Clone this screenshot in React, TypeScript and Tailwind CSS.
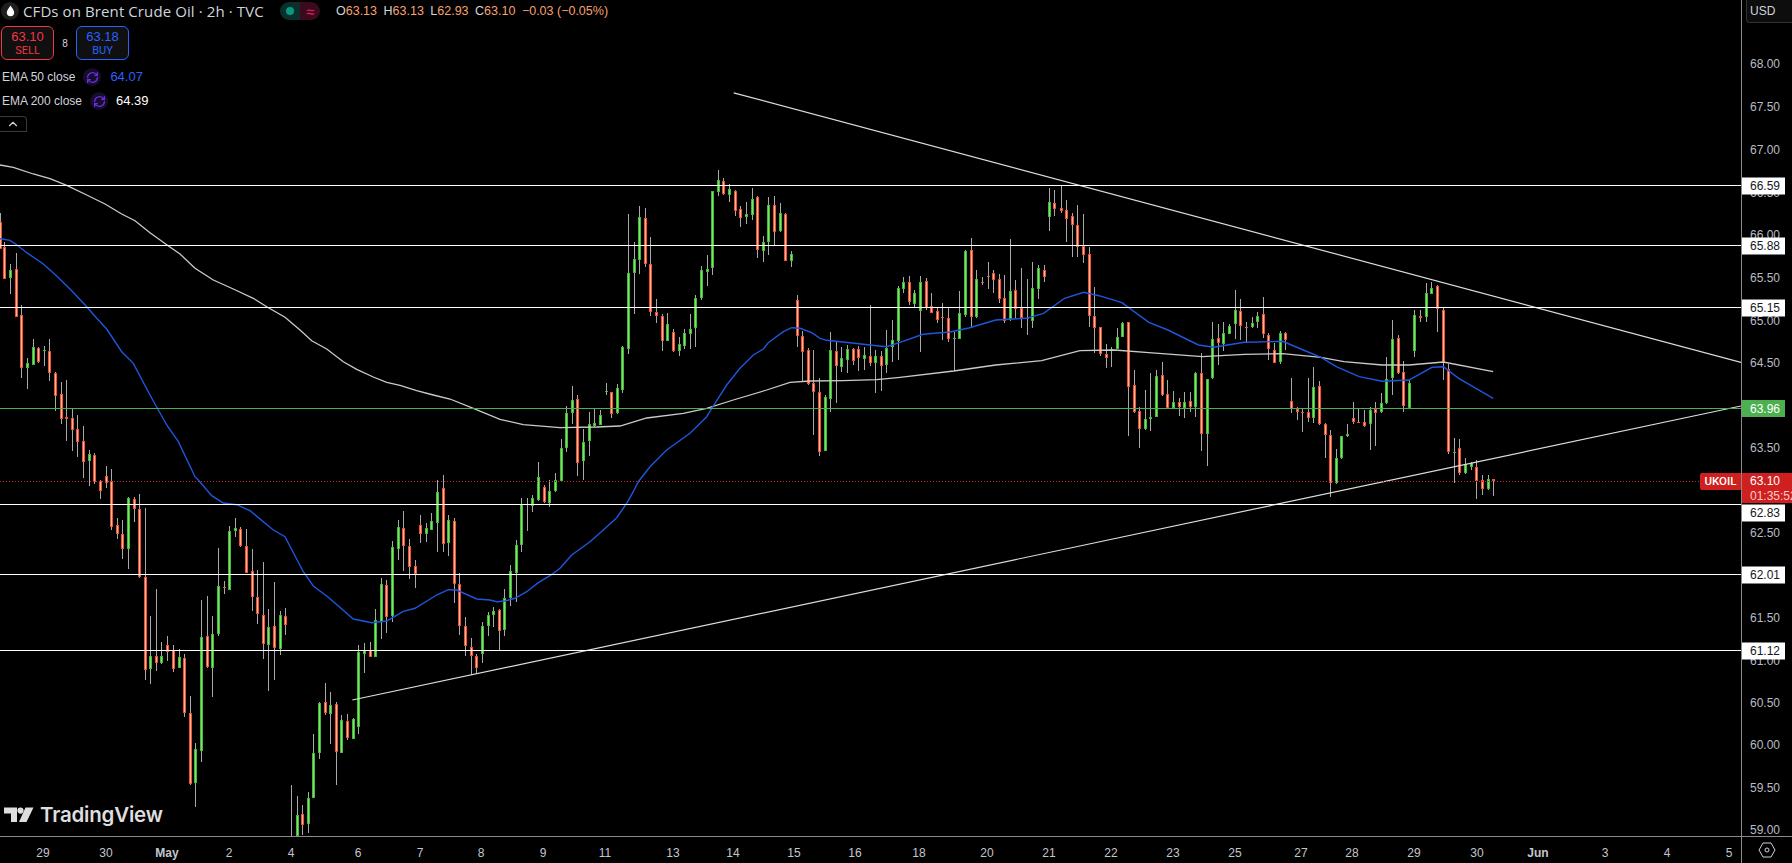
import { RefreshCw, ChevronUp } from "lucide-react";

type C = number[];
const FONT = "font-['Liberation_Sans',Arial,sans-serif]";

// [x, wickTop, wickBottom, bodyTop, bodyBottom, up]
const A: C[] = [
  [0, 190, 296, 216, 296, 0], [13, 275, 386, 292, 386, 0], [31, 342, 432, 360, 384, 1], [49, 310, 500, 358, 500, 0],
  [64, 465, 684, 496, 654, 0], [82, 625, 717, 640, 654, 1], [100, 567, 645, 592, 644, 1], [115, 592, 638, 595, 636, 0],
  [133, 588, 648, 600, 602, 1], [148, 567, 693, 604, 670, 0], [166, 665, 783, 670, 738, 0], [184, 696, 822, 733, 806, 0],
  [199, 690, 873, 802, 808, 0], [217, 777, 903, 805, 839, 0], [232, 795, 921, 838, 876, 0], [250, 828, 984, 874, 935, 0],
  [268, 900, 1008, 912, 933, 1], [283, 909, 1002, 915, 996, 0], [301, 990, 1047, 992, 1022, 0], [319, 948, 1014, 979, 999, 0],
];
const B: C[] = [
  [334, -33, 150, 4, 140, 0], [352, 114, 177, 136, 161, 0], [367, 120, 237, 163, 206, 0], [385, 52, 267, 55, 207, 1],
  [403, 50, 126, 58, 86, 0], [418, 42, 293, 88, 292, 0], [436, 84, 600, 292, 569, 0], [451, 408, 612, 529, 566, 1],
  [469, 327, 573, 529, 548, 0], [484, 486, 552, 529, 548, 1], [502, 468, 543, 496, 515, 0], [520, 495, 576, 511, 566, 0],
  [538, 507, 564, 532, 563, 1], [553, 522, 711, 535, 698, 0], [571, 648, 915, 700, 912, 0], [586, 790, 981, 808, 908, 1],
  [604, 360, 846, 472, 812, 1], [622, 348, 564, 469, 561, 0], [637, 408, 651, 463, 563, 1], [655, 204, 468, 319, 462, 1],
  [673, 303, 342, 322, 324, 0], [688, 138, 330, 154, 329, 1], [706, 114, 171, 145, 153, 1], [721, 141, 201, 148, 198, 0],
  [739, 147, 279, 199, 278, 0], [757, 207, 393, 274, 350, 0], [772, 270, 432, 352, 403, 0], [790, 246, 537, 406, 492, 0],
  [805, 387, 633, 441, 495, 1], [823, 306, 600, 439, 503, 0], [841, 393, 525, 406, 507, 1], [856, 384, 465, 409, 435, 0],
  [874, 915, 1068, 1068, 1068, 1], [892, 948, 1068, 1005, 1068, 1], [907, 975, 1065, 1003, 1034, 0], [925, 936, 1059, 955, 1031, 1],
  [940, 762, 954, 820, 953, 1], [958, 667, 837, 670, 819, 1], [976, 609, 704, 667, 698, 0], [991, 636, 792, 676, 701, 1],
  [1009, 666, 915, 673, 815, 0], [1024, 705, 819, 721, 818, 1], [1042, 702, 780, 724, 775, 0], [1060, 714, 778, 717, 776, 1],
  [1075, 495, 762, 517, 740, 1], [1093, 489, 579, 511, 521, 1], [1111, 486, 531, 509, 530, 0], [1126, 387, 531, 421, 530, 1],
  [1144, 294, 477, 313, 425, 1], [1159, 300, 459, 316, 410, 0], [1177, 183, 426, 202, 408, 1], [1195, 121, 240, 142, 207, 1],
  [1210, 93, 273, 145, 197, 0], [1228, 177, 297, 199, 262, 0], [1246, 240, 324, 259, 283, 0], [1261, 105, 189, 136, 161, 0],
  [1279, 129, 186, 145, 163, 1], [1294, 99, 150, 124, 149, 1], [1312, 0, 216, 37, 129, 1], [1330, -15, 216, 25, 191, 0],
  [1345, 105, 228, 121, 188, 1], [1363, 115, 370, 124, 311, 0], [1378, 280, 465, 313, 437, 0], [1396, 411, 528, 439, 497, 0],
  [1414, 474, 585, 502, 527, 0], [1429, 522, 582, 529, 563, 0], [1447, 426, 549, 439, 521, 1], [1465, 396, 468, 406, 438, 1],
  [1480, 381, 441, 394, 404, 1], [1498, 387, 510, 390, 452, 0],
];
const D: C[] = [
  [43, 327, 468, 354, 450, 1], [61, 255, 378, 273, 354, 1], [79, 180, 366, 195, 279, 1], [94, 54, 216, 73, 195, 1],
  [112, 54, 153, 71, 75, 1], [127, 45, 96, 54, 78, 1], [145, -54, 62, -10, 60, 1], [163, 15, 69, 21, 66, 0], [178, 0, 81, 33, 69, 1],
];
const E: C[] = [
  [316, 968, 1025, 990, 1023, 1], [334, 867, 990, 895, 992, 1], [349, 768, 905, 789, 893, 1], [367, 708, 822, 751, 788, 1],
  [382, 735, 978, 748, 938, 0], [400, 837, 990, 875, 932, 1], [418, 786, 918, 823, 872, 1], [433, 775, 830, 820, 827, 1],
  [451, 781, 825, 796, 824, 1], [469, 700, 735, 723, 725, 1], [484, 727, 804, 727, 792, 0], [502, 702, 792, 715, 788, 1],
  [517, 588, 730, 591, 719, 1], [535, 192, 612, 370, 596, 1], [553, 276, 492, 328, 368, 1], [568, 168, 372, 202, 329, 1],
  [586, 174, 350, 205, 341, 0], [601, 261, 498, 343, 485, 0], [619, 447, 519, 487, 497, 0], [637, 492, 603, 499, 574, 0],
  [652, 489, 573, 523, 572, 1], [670, 537, 606, 547, 603, 0], [688, 561, 618, 583, 603, 1], [703, 537, 597, 549, 588, 1],
  [721, 492, 597, 538, 551, 1], [736, 435, 591, 445, 533, 1], [754, 348, 450, 361, 444, 1], [772, 315, 408, 358, 365, 1],
  [787, 124, 375, 124, 353, 1], [805, 60, 138, 91, 125, 1], [820, 84, 135, 94, 131, 0], [838, 102, 156, 118, 134, 1],
  [856, 120, 198, 124, 182, 0], [871, 168, 231, 178, 203, 0], [889, 156, 222, 193, 200, 1], [907, 114, 210, 148, 194, 1],
  [922, 138, 324, 142, 299, 0], [940, 258, 336, 277, 302, 1], [955, 141, 315, 166, 275, 1], [973, 138, 288, 166, 245, 0],
  [991, 159, 246, 190, 242, 1], [1006, 190, 333, 193, 332, 0], [1024, 303, 351, 313, 332, 1], [1042, 435, 591, 451, 559, 0],
  [1057, 543, 693, 559, 605, 0], [1075, 594, 705, 601, 703, 0], [1090, 600, 855, 700, 727, 0], [1108, 684, 918, 727, 905, 0],
  [1126, 735, 903, 742, 902, 1], [1141, 546, 786, 601, 746, 1], [1159, 573, 759, 604, 647, 0], [1174, 591, 666, 625, 650, 1],
  [1192, 585, 669, 598, 629, 1], [1210, 594, 645, 598, 632, 0], [1225, 588, 663, 598, 623, 0], [1243, 591, 660, 616, 626, 1],
  [1261, 465, 648, 619, 638, 0], [1276, 600, 729, 619, 638, 1], [1294, 603, 723, 619, 647, 0], [1309, 540, 669, 595, 644, 1],
  [1327, 510, 636, 571, 592, 1], [1345, 408, 630, 415, 574, 1],
];
const F: C[] = [
  [9, 380, 430, 397, 416, 1], [24, 378, 465, 397, 455, 0], [39, 420, 470, 430, 462, 1], [54, 378, 605, 397, 482, 1],
  [69, 385, 480, 394, 473, 0], [82, 430, 490, 469, 488, 0], [97, 470, 520, 484, 510, 0], [112, 458, 570, 501, 503, 0],
  [127, 470, 575, 505, 566, 0], [142, 545, 663, 565, 567, 1], [156, 423, 565, 490, 566, 1], [171, 300, 500, 304, 494, 1],
  [186, 265, 533, 301, 500, 0], [200, 360, 505, 388, 500, 1], [215, 380, 405, 396, 399, 0], [230, 337, 418, 379, 381, 0],
  [244, 360, 430, 369, 389, 0], [259, 372, 460, 388, 446, 0], [273, 375, 520, 445, 514, 0], [288, 267, 512, 423, 508, 1],
  [303, 390, 505, 421, 476, 0], [318, 355, 535, 473, 503, 0], [333, 387, 555, 503, 508, 0], [346, 335, 535, 415, 512, 1],
  [362, 345, 447, 355, 416, 1], [378, 345, 395, 361, 380, 0],
  [390, 113, 242, 156, 200, 1], [405, 120, 197, 159, 176, 0], [421, 105, 190, 175, 182, 0], [435, 150, 275, 181, 208, 0],
  [450, 190, 322, 199, 226, 0], [464, 165, 322, 226, 292, 0], [479, 192, 340, 289, 316, 0], [494, 292, 530, 313, 499, 0],
  [508, 410, 610, 499, 533, 0], [523, 530, 617, 531, 613, 0], [539, 583, 654, 613, 623, 0], [553, 590, 650, 597, 601, 1],
  [568, 533, 597, 562, 596, 1], [582, 516, 560, 518, 561, 1], [597, 515, 857, 517, 710, 0], [612, 660, 790, 706, 785, 0],
  [626, 770, 893, 784, 838, 0], [641, 720, 840, 807, 838, 1], [655, 670, 842, 801, 806, 1], [670, 660, 802, 679, 800, 1],
  [685, 636, 737, 676, 736, 0], [699, 690, 775, 733, 773, 0], [714, 722, 775, 757, 773, 1], [730, 743, 797, 757, 770, 0],
  [743, 725, 803, 755, 773, 1], [759, 725, 785, 754, 770, 0], [773, 667, 800, 670, 770, 1], [788, 610, 902, 670, 851, 0],
  [803, 690, 947, 688, 851, 1], [817, 515, 686, 568, 685, 1], [832, 522, 644, 565, 578, 0], [845, 517, 603, 550, 582, 1],
  [860, 523, 553, 529, 551, 1], [877, 420, 566, 481, 521, 1], [889, 447, 569, 484, 529, 0], [905, 517, 578, 532, 534, 0],
  [920, 500, 534, 518, 532, 1], [934, 487, 533, 499, 517, 1], [949, 442, 565, 493, 553, 0], [963, 548, 630, 556, 596, 0],
  [978, 580, 637, 599, 638, 0], [993, 544, 642, 548, 635, 1], [1007, 546, 600, 550, 570, 0],
  [1022, 684, 790, 752, 777, 0], [1038, 770, 810, 778, 785, 0], [1052, 775, 845, 786, 788, 0], [1067, 685, 817, 787, 805, 0],
  [1081, 650, 820, 712, 803, 1], [1096, 693, 825, 709, 821, 0], [1111, 820, 925, 822, 856, 0], [1125, 840, 1040, 856, 1000, 0],
  [1140, 897, 1002, 925, 1000, 1], [1154, 857, 927, 859, 925, 1], [1169, 822, 862, 852, 858, 1], [1185, 756, 822, 805, 815, 0],
  [1198, 775, 820, 816, 819, 0], [1214, 780, 830, 817, 827, 0], [1229, 772, 900, 780, 823, 1], [1243, 757, 887, 778, 788, 0],
  [1258, 730, 790, 760, 785, 1], [1271, 620, 763, 686, 759, 1], [1287, 510, 735, 568, 685, 1], [1302, 555, 672, 565, 670, 0],
  [1316, 632, 785, 666, 767, 0], [1331, 690, 775, 700, 775, 1], [1344, 480, 620, 495, 602, 1], [1360, 480, 515, 499, 503, 0],
  [1375, 398, 515, 430, 500, 1], [1389, 395, 430, 415, 431, 1], [1405, 405, 545, 408, 478, 0], [1420, 475, 690, 481, 635, 0],
  [1434, 642, 912, 658, 907, 0], [1449, 865, 1000, 906, 908, 1], [1463, 868, 975, 895, 970, 0], [1478, 923, 972, 942, 970, 1],
  [1493, 935, 960, 940, 950, 1], [1507, 930, 1047, 952, 993, 0], [1522, 976, 1035, 990, 1016, 0], [1538, 976, 1020, 988, 1018, 1],
  [1552, 987, 1037, 988, 994, 0],
];

const conv = (list: C[], ox: number, oy: number, sx = 3): C[] =>
  list.map(([x, a, b, c, d, u]) => [ox + x / sx, oy + a / 3, oy + b / 3, oy + c / 3, oy + d / 3, u]);

const candles: C[] = [
  ...conv(A, 0, 150),
  ...conv(B, 0, 480),
  [499.7, 609, 650, 610, 631, 0],
  ...conv(D, 490, 480),
  ...conv(E, 450, 150),
  ...conv(F, 900, 150, 2.613),
];

const path = (list: number[][], ox: number, oy: number, sx = 3) =>
  list.map(([x, y]) => `${(ox + x / sx).toFixed(1)},${(oy + y / 3).toFixed(1)}`).join(" ");

const ema200 = [
  path([[0,45],[40,52],[100,72],[150,86],[200,106],[260,135],[315,162],[365,192],[405,212],[450,248],[500,284],[540,312],[585,355],[640,390],[700,417],[760,445],[800,470],[855,502],[900,540],[935,572],[980,597],[1030,635],[1070,658],[1120,681],[1160,697],[1200,706],[1250,722],[1300,735]], 0, 150),
  path([[0,747],[70,775],[150,808],[220,824],[330,833],[440,831],[510,828],[590,804],[700,790],[770,775],[850,750],[950,720],[1020,697],[1080,693],[1180,692],[1280,689]], 450, 150),
  path([[0,682],[140,663],[250,645],[370,632],[470,602],[560,600],[650,608],[790,620],[900,613],[1000,611],[1100,622],[1160,635],[1260,645],[1330,645],[1420,636],[1550,665]], 900, 150, 2.613),
].join(" ");

const ema50 = [
  path([[0,266],[30,271],[50,284],[80,308],[130,342],[170,378],[215,422],[260,470],[290,505],[320,537],[365,605],[400,640],[450,735],[500,825],[535,875],[585,980]], 0, 150),
  path([[595,0],[635,47],[670,69],[710,74],[750,92],[820,150],[855,170],[910,275],[940,318],[985,352],[1060,417],[1115,428],[1160,423],[1210,394],[1245,385],[1310,345],[1345,329],[1370,330],[1430,357]], 0, 480),
  path([[0,360],[20,365],[45,363],[75,355],[110,335],[145,308],[180,287],[210,265],[245,225],[300,185],[340,150],[380,113],[410,70],[430,35]], 490, 480),
  path([[565,995],[600,950],[650,900],[720,850],[770,800],[790,768],[830,705],[870,655],[910,615],[940,597],[955,578],[1000,545],[1025,533],[1050,535],[1085,548],[1110,565],[1130,571],[1200,578],[1280,587],[1310,590]], 450, 150),
  path([[0,577],[60,553],[130,546],[180,534],[250,510],[330,505],[375,490],[430,445],[480,427],[520,437],[580,458],[650,517],[700,540],[780,585],[820,592],[900,577],[1000,574],[1060,603],[1100,622],[1140,650],[1200,680],[1260,694],[1330,690],[1390,652],[1420,650],[1460,685],[1550,745]], 900, 150, 2.613),
].join(" ");

const hLines = [185, 245, 307, 504, 574, 650];

const priceTicks: [string, number][] = [
  ["68.00", 64], ["67.50", 107], ["67.00", 150], ["66.50", 193], ["66.00", 235], ["65.50", 278], ["65.00", 321],
  ["64.50", 363], ["63.50", 448], ["62.50", 533], ["61.50", 618], ["61.00", 661], ["60.50", 703], ["60.00", 745],
  ["59.50", 788], ["59.00", 830],
];
const levelTags: [string, number][] = [["66.59", 185], ["65.88", 245], ["65.15", 307], ["62.83", 512], ["62.01", 574], ["61.12", 650]];

const dates: [string, number][] = [
  ["29", 43], ["30", 106], ["May", 167], ["2", 229], ["4", 291], ["6", 358], ["7", 420], ["8", 481], ["9", 543], ["11", 605],
  ["13", 673], ["14", 733], ["15", 794], ["16", 855], ["18", 919], ["20", 987], ["21", 1049], ["22", 1111], ["23", 1173],
  ["25", 1235], ["27", 1301], ["28", 1352], ["29", 1414], ["30", 1477], ["Jun", 1538], ["3", 1605], ["4", 1667], ["5", 1729],
];

function Chart() {
  return (
    <svg width={1741} height={836} className="block">
      <g shapeRendering="crispEdges">
        {candles.map((c, i) => {
          const col = Math.floor(c[0]);
          const up = c[5] === 1;
          const t = Math.round(c[3]);
          const h = Math.max(1, Math.round(c[4]) - t);
          return (
            <g key={i}>
              <rect x={col} y={Math.round(c[1])} width={1} height={Math.max(1, Math.round(c[2]) - Math.round(c[1]))} fill="#a9a9a9" />
              {c[3] !== c[4] && <rect x={col - 1} y={t} width={3} height={h} fill={up ? "#45b83f" : "#f0503a"} />}
              {c[3] !== c[4] && h > 2 && <rect x={col} y={t + 1} width={1} height={h - 2} fill={up ? "#7be65e" : "#ffb88f"} />}
            </g>
          );
        })}
      </g>
      <polyline points={ema200} fill="none" stroke="#cacaca" strokeWidth={1.3} />
      <polyline points={ema50} fill="none" stroke="#1f56de" strokeWidth={1.4} />
      <line x1={733.7} y1={92.8} x2={1741} y2={362.4} stroke="#dcdcdc" strokeWidth={1.2} />
      <line x1={352.3} y1={700} x2={1741} y2={406} stroke="#dcdcdc" strokeWidth={1.2} />
      <g shapeRendering="crispEdges">
        {hLines.map((y) => (
          <rect key={y} x={0} y={y} width={1741} height={1} fill="#ffffff" />
        ))}
        <rect x={0} y={408} width={1741} height={1} fill="#4caf50" />
        <line x1={0} y1={481.5} x2={1700} y2={481.5} stroke="#c2262e" strokeWidth={1} strokeDasharray="1 2" />
      </g>
    </svg>
  );
}

function Legend() {
  return (
    <div className={`absolute left-0 top-0 flex flex-col items-start text-[#d1d4dc] ${FONT}`}>
      <div className="flex h-[22px] items-center">
        <span className="ml-px flex h-[18px] w-[18px] items-center justify-center rounded-full bg-[#1f1f1f]">
          <svg width="9" height="12" viewBox="0 0 9 12">
            <path d="M4.5 0.5C5.8 2.8 8.2 5 8.2 7.6A3.7 3.7 0 0 1 0.8 7.6C0.8 5 3.2 2.8 4.5 0.5Z" fill="#ffffff" />
          </svg>
        </span>
        <span className="ml-[4px] w-[257px] whitespace-nowrap font-['Open_Sans',sans-serif] text-[15px] tracking-[0.1px] text-[#d1d4dc]">CFDs on Brent Crude Oil · 2h · TVC</span>
        <span className="flex h-[18px] w-[40px] overflow-hidden rounded-full">
          <span className="flex w-[20px] items-center justify-center bg-[#0b2f2a]">
            <span className="h-[8px] w-[8px] rounded-full bg-[#089981]" />
          </span>
          <span className="flex w-[20px] items-center justify-center bg-[#3b0a1e] text-[15px] leading-none text-[#e91e63]">≈</span>
        </span>
        <div className="ml-[16px] flex gap-[6.5px] whitespace-nowrap text-[12.5px] text-[#d1d4dc]">
          <span>O<span className="text-[#f7a072]">63.13</span></span>
          <span>H<span className="text-[#f7a072]">63.13</span></span>
          <span>L<span className="text-[#f7a072]">62.93</span></span>
          <span>C<span className="text-[#f7a072]">63.10</span></span>
          <span className="text-[#f7a072]">−0.03 (−0.05%)</span>
        </div>
      </div>
      <div className="mt-[4px] ml-px flex items-center">
        <div className="flex h-[34px] w-[53px] flex-col items-center justify-center rounded-[6px] border border-[#f23645] bg-[#101010] text-[#f23645]">
          <span className="text-[13px] leading-[15px]">63.10</span>
          <span className="font-['Roboto',sans-serif] text-[11px] leading-[14px]">SELL</span>
        </div>
        <span className="w-[22px] text-center text-[10px] text-[#d1d4dc]">8</span>
        <div className="flex h-[34px] w-[53px] flex-col items-center justify-center rounded-[6px] border border-[#2962ff] bg-[#101010] text-[#2962ff]">
          <span className="text-[13px] leading-[15px]">63.18</span>
          <span className="font-['Roboto',sans-serif] text-[11px] leading-[14px]">BUY</span>
        </div>
      </div>
      <div className="mt-[5px] ml-[2px] flex h-[24px] items-center text-[12px]">
        <span>EMA 50 close</span>
        <span className="ml-[8px] flex h-[18px] w-[18px] items-center justify-center rounded-full bg-[#160d2b]">
          <RefreshCw size={13} strokeWidth={2.4} color="#6d2ee8" />
        </span>
        <span className="ml-[9px] text-[13px] text-[#2962ff]">64.07</span>
      </div>
      <div className="ml-[2px] flex h-[24px] items-center text-[12px]">
        <span>EMA 200 close</span>
        <span className="ml-[8px] flex h-[18px] w-[18px] items-center justify-center rounded-full bg-[#160d2b]">
          <RefreshCw size={13} strokeWidth={2.4} color="#6d2ee8" />
        </span>
        <span className="ml-[8px] text-[13px] text-white">64.39</span>
      </div>
      <button className="mt-[3px] flex h-[16px] w-[27px] items-center justify-center rounded-tr-[4px] border border-l-0 border-[#3a3a3a] text-[#d1d4dc]">
        <ChevronUp size={14} strokeWidth={2} />
      </button>
    </div>
  );
}

function Watermark() {
  return (
    <div className="absolute left-[3px] top-[803px] flex h-[24px] items-center text-[#dedede]">
      <svg width="32" height="16" viewBox="0 0 32 16" fill="currentColor">
        <path d="M1 0.5H14V15H8V6.5H1Z" />
        <circle cx="17.5" cy="3.6" r="3.1" />
        <path d="M22.5 0.5H30.5L23.5 15H16Z" />
      </svg>
      <span className="ml-[5px] font-['Inter',sans-serif] text-[20.5px] font-semibold leading-none tracking-[-0.2px]">TradingView</span>
    </div>
  );
}

function PriceAxis() {
  return (
    <div className={`relative h-full w-[51px] overflow-hidden border-l border-[#8a8a8a] text-[12px] ${FONT}`}>
      <div className="absolute left-[4px] top-0 flex h-[23px] w-[60px] items-center rounded-bl-[4px] border-b border-l border-[#333333] bg-[#0d0d0d] pl-[3px] text-[#d1d4dc]">
        USD
      </div>
      {priceTicks.map(([t, y]) => (
        <span key={t} className="absolute left-[8px] -translate-y-1/2 text-[#b9bcc4]" style={{ top: y }}>{t}</span>
      ))}
      {levelTags.map(([t, y]) => (
        <span key={t} className="absolute left-0 flex h-[17px] w-[43px] -translate-y-1/2 items-center bg-white pl-[8px] text-[#131722]" style={{ top: y + 0.5 }}>{t}</span>
      ))}
      <span className="absolute left-0 top-[400px] flex h-[17px] w-[43px] items-center bg-[#4caf50] pl-[8px] text-white">63.96</span>
      <div className="absolute left-0 top-[473px] flex h-[30px] w-full flex-col bg-[#cf1f1f] pl-[8px]">
        <span className="h-[16px] leading-[16px] text-white">63.10</span>
        <span className="whitespace-nowrap text-[12px] leading-[14px] text-[#ffc9c9]">01:35:52</span>
      </div>
    </div>
  );
}

function TimeAxis() {
  return (
    <div className={`relative h-full flex-1 text-[12px] text-[#c4c6cc] ${FONT}`}>
      {dates.map(([t, x], i) => (
        <span
          key={i}
          className={`absolute top-[7px] -translate-x-1/2 ${t === "May" || t === "Jun" ? "font-bold" : ""}`}
          style={{ left: x }}
        >
          {t}
        </span>
      ))}
    </div>
  );
}

export default function App() {
  return (
    <div className="flex h-[863px] w-[1792px] flex-col overflow-hidden bg-black">
      <div className="flex h-[836px]">
        <div className="relative h-full w-[1741px]">
          <Chart />
          <div className="absolute left-[1700px] top-[473px] flex h-[17px] w-[41px] items-center justify-center rounded-l-[2px] bg-[#cf1f1f] font-['Roboto',sans-serif] text-[11.5px] font-medium text-white">
            UKOIL
          </div>
          <Legend />
          <Watermark />
        </div>
        <PriceAxis />
      </div>
      <div className="flex h-[27px] border-t border-[#8a8a8a]">
        <TimeAxis />
        <div className="flex h-full w-[51px] items-center justify-center border-l border-[#8a8a8a]">
          <svg width="18" height="16" viewBox="0 0 18 16" fill="none" stroke="#d1d4dc" strokeWidth="1">
            <path d="M5 1H13L17 8L13 15H5L1 8Z" />
            <circle cx="9" cy="8" r="2" />
          </svg>
        </div>
      </div>
    </div>
  );
}
